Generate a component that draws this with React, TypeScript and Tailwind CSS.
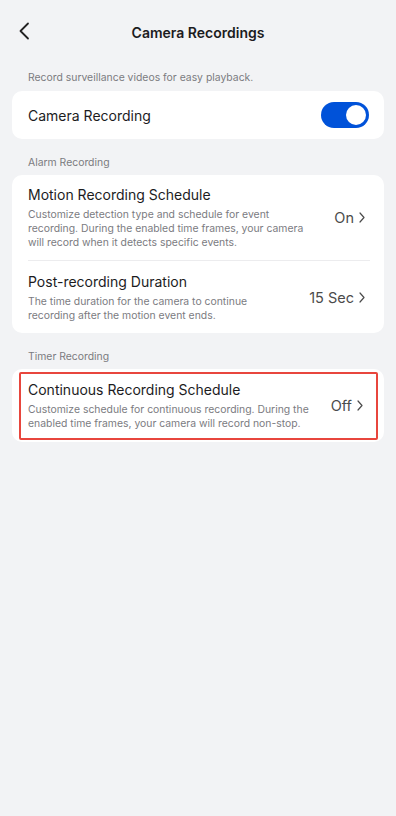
const Chevron = () => (
  <svg width="6" height="11" viewBox="0 0 6 11" fill="none" className="ml-[5px]">
    <path d="M1 1l4 4.5L1 10" stroke="#4b4b4b" strokeWidth="1.2" strokeLinecap="round" strokeLinejoin="round" />
  </svg>
);

type RowProps = { title: string; desc: string[]; value: string };

const Row = ({ title, desc, value }: RowProps) => (
  <div className="flex items-center justify-between">
    <div className="flex-1">
      <p className="text-[14px] leading-[20px] text-[#1c1c1e]">{title}</p>
      <p className="mt-[3px] text-[10.4px] leading-[14px] text-[#7b7b7f]">
        {desc.map((line, i) => (
          <span key={i} className="block">
            {line}
          </span>
        ))}
      </p>
    </div>
    <div className="flex items-center text-[14.5px] text-[#4b4b4b]">
      {value}
      <Chevron />
    </div>
  </div>
);

export default function App() {
  return (
    <div
      className="min-h-[816px] w-[396px] bg-[#f2f3f5]"
      style={{ fontFamily: "Inter, 'Noto Sans', sans-serif" }}
    >
      <div className="relative flex h-[64px] items-center justify-center">
        <svg
          width="12"
          height="18"
          viewBox="0 0 12 18"
          fill="none"
          className="absolute left-[18px] top-[22px]"
        >
          <path d="M10 1.5L2.5 9l7.5 7.5" stroke="#222" strokeWidth="1.8" strokeLinecap="round" strokeLinejoin="round" />
        </svg>
        <h1 className="text-[14px] font-semibold text-[#1c1c1e]">Camera Recordings</h1>
      </div>

      <p className="mt-[7px] px-[28px] text-[10.4px] leading-[14px] text-[#7b7b7f]">
        Record surveillance videos for easy playback.
      </p>
      <div className="mx-3 mt-[6px] flex h-[48px] items-center justify-between rounded-[10px] bg-white pl-4 pr-[15px]">
        <span className="text-[14px] text-[#1c1c1e]">Camera Recording</span>
        <div className="flex h-[26px] w-[48px] items-center justify-end rounded-full bg-[#0052d9] px-[3px]">
          <div className="h-[20px] w-[20px] rounded-full bg-white" />
        </div>
      </div>

      <p className="mt-[17px] px-[28px] text-[10.4px] leading-[14px] text-[#7b7b7f]">Alarm Recording</p>
      <div className="mx-3 mt-[5px] rounded-[10px] bg-white pl-4 pr-[19px]">
        <div className="pb-[10px] pt-[10px]">
          <Row
            title="Motion Recording Schedule"
            desc={[
              "Customize detection type and schedule for event",
              "recording. During the enabled time frames, your camera",
              "will record when it detects specific events.",
            ]}
            value="On"
          />
        </div>
        <div className="mr-[-5px] h-px bg-[#ececee]" />
        <div className="pb-[10px] pt-[11px]">
          <Row
            title="Post-recording Duration"
            desc={[
              "The time duration for the camera to continue",
              "recording after the motion event ends.",
            ]}
            value="15 Sec"
          />
        </div>
      </div>

      <p className="mt-[17px] px-[28px] text-[10.4px] leading-[14px] text-[#7b7b7f]">Timer Recording</p>
      <div className="mx-3 mt-[5px] rounded-[10px] bg-white pb-[2px] pl-[7px] pr-[6px] pt-[3px]">
        <div className="rounded-[2px] border-2 border-[#e8463d] pb-[7px] pl-[7px] pr-[13px] pt-[6px]">
          <Row
            title="Continuous Recording Schedule"
            desc={[
              "Customize schedule for continuous recording. During the",
              "enabled time frames, your camera will record non-stop.",
            ]}
            value="Off"
          />
        </div>
      </div>
    </div>
  );
}
